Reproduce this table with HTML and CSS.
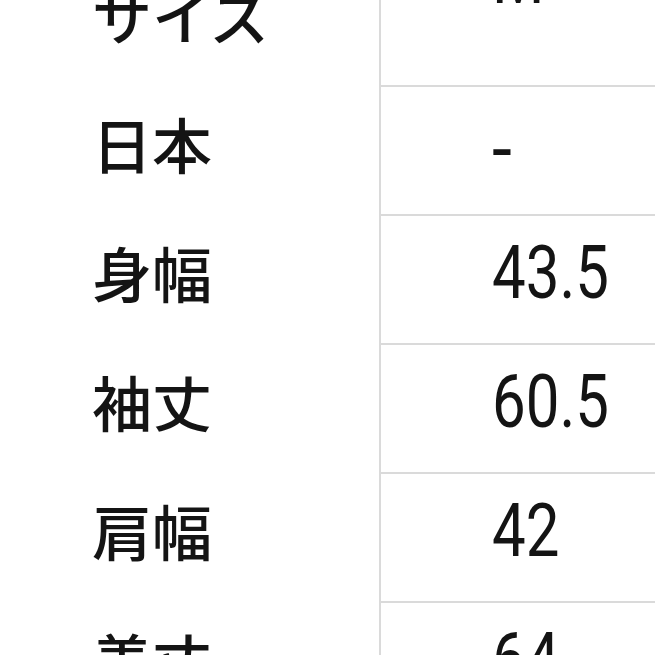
FILE: index.html
```html
<!DOCTYPE html>
<html lang="ja">
<head>
<meta charset="utf-8">
<title>サイズ表</title>
<link rel="stylesheet" href="styles.css">
</head>
<body>
<div class="table">
  <div class="row">
    <div class="label">サイズ</div>
    <div class="value value-head"><span class="num">M</span></div>
  </div>
  <div class="row">
    <div class="label">日本</div>
    <div class="value"><span class="num dash">-</span></div>
  </div>
  <div class="row">
    <div class="label">身幅</div>
    <div class="value"><span class="num">43.5</span></div>
  </div>
  <div class="row">
    <div class="label">袖丈</div>
    <div class="value"><span class="num">60.5</span></div>
  </div>
  <div class="row">
    <div class="label">肩幅</div>
    <div class="value"><span class="num">42</span></div>
  </div>
  <div class="row">
    <div class="label">着丈</div>
    <div class="value"><span class="num">64</span></div>
  </div>
</div>
</body>
</html>
```
FILE: styles.css
```css
html, body {
  margin: 0;
  padding: 0;
  background: #ffffff;
}
body {
  width: 655px;
  height: 655px;
  overflow: hidden;
  color: #141414;
  font-family: "Noto Sans CJK JP", "Noto Sans", sans-serif;
}
.table {
  margin-top: -42px;
  display: flex;
  flex-direction: column;
}
.row {
  display: flex;
  height: 129px;
}
.label {
  width: 379px;
  box-sizing: border-box;
  padding: 26px 0 0 92px;
  font-size: 60px;
  line-height: 60px;
  font-weight: 500;
}
.value {
  flex: 1;
  box-sizing: border-box;
  border-left: 2px solid #dadada;
  border-bottom: 2px solid #dadada;
  padding: 31px 0 0 111px;
}
.value-head {
  padding-top: 0;
}
.value-head .num {
  margin-top: -6px;
}
.num {
  display: inline-block;
  font-family: Roboto, "Noto Sans", sans-serif;
  font-size: 60px;
  line-height: 60px;
  transform: scaleY(1.22);
  transform-origin: 50% 75%;
}
.num.dash {
  margin-top: 6px;
  transform: scale(1.2, 1.3);
  transform-origin: 0 75%;
}
```
